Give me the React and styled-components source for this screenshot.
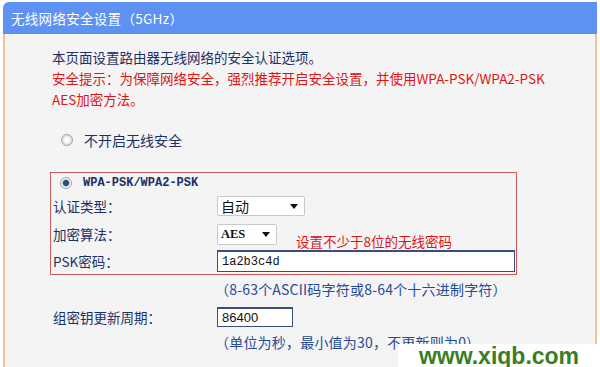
import React from 'react';
import styled, { createGlobalStyle } from 'styled-components';

const GlobalStyle = createGlobalStyle`
  html, body {
    margin: 0;
    padding: 0;
    background: #fff;
  }
  body {
    font-family: "Noto Sans CJK SC", "Noto Sans", sans-serif;
  }
`;

const Page = styled.div`
  position: relative;
  width: 600px;
  height: 367px;
  padding: 2px 3px 0 3px;
  box-sizing: border-box;
  overflow: hidden;
  display: flex;
  flex-direction: column;
`;

const Header = styled.div`
  height: 32px;
  flex-shrink: 0;
  background: #5d92f2;
  border-radius: 6px 0 0 0;
  color: #fff;
  font-size: 13.5px;
  line-height: 32px;
  padding-left: 8px;
  letter-spacing: 0.3px;
`;

const Body = styled.div`
  flex: 1;
  background: #f4f4f4;
  border-left: 2px solid #f2c48f;
  border-right: 2px solid #f2c48f;
  padding: 13px 0 0 47px;
  font-size: 13.5px;
  color: #1c2f66;
`;

const Intro = styled.p`
  margin: 0;
  line-height: 21px;
  color: ${p => (p.$warn ? '#e01414' : '#1c2f66')};
`;

const RadioRow = styled.div`
  display: flex;
  align-items: center;
  height: ${p => p.$h || 20}px;
  padding-left: ${p => p.$pl ?? 9}px;
  margin-top: ${p => p.$mt || 0}px;
  font-size: 14px;
`;

const Radio = styled.span`
  width: 12px;
  height: 12px;
  border-radius: 50%;
  box-sizing: border-box;
  border: 1px solid #a9a9a9;
  background: ${p =>
    p.$checked
      ? 'radial-gradient(circle, #2a4f7a 0 2.6px, #7fa3c4 3.2px, #e8e8e8 3.8px, #fdfdfd 100%)'
      : 'radial-gradient(circle, #fafafa 0 2.5px, #d6d6d6 5px)'};
  margin-right: 11px;
  flex-shrink: 0;
`;

const MonoLabel = styled.span`
  font-family: "Liberation Mono", monospace;
  font-size: 12px;
  font-weight: bold;
  color: #1c2f66;
`;

const SecurityBox = styled.div`
  margin: 22px 0 0 -2px;
  width: 467px;
  height: 103px;
  box-sizing: border-box;
  border: 1px solid #d05a5a;
  padding-left: 2px;
`;

const FormRow = styled.div`
  display: grid;
  grid-template-columns: 164px auto 1fr;
  align-items: center;
  height: ${p => p.$h}px;
  padding-left: ${p => p.$pl || 0}px;
`;

const Label = styled.span`
  font-size: 13.5px;
  color: #1c2f66;
`;

const Select = styled.div`
  display: flex;
  align-items: center;
  justify-content: space-between;
  width: ${p => p.$w}px;
  height: ${p => p.$hh}px;
  box-sizing: border-box;
  background: #fff;
  border: 1px solid #c9c9c9;
  border-radius: 2px;
  padding: 0 6px 0 3px;
  font-size: 14px;
  color: #111;
`;

const SelectMono = styled.span`
  font-family: "Liberation Serif", serif;
  font-size: 12.5px;
  font-weight: bold;
`;

const Arrow = styled.span`
  width: 0;
  height: 0;
  border-left: 4px solid transparent;
  border-right: 4px solid transparent;
  border-top: 5px solid #111;
`;

const Note = styled.span`
  align-self: end;
  margin: 0 0 -3px 19px;
  color: #e01414;
  font-size: 13.5px;
`;

const TextInput = styled.div`
  width: ${p => p.$w}px;
  height: ${p => p.$hh}px;
  box-sizing: border-box;
  background: #fff;
  border: 1px solid #3b4d78;
  border-top-width: 2px;
  padding-left: 4px;
  display: flex;
  align-items: center;
  color: #111;
  font-family: ${p => (p.$mono ? '"Liberation Mono", monospace' : '"Liberation Sans", sans-serif')};
  font-size: ${p => (p.$mono ? 12 : 13)}px;
`;

const Hint = styled.div`
  height: ${p => p.$h}px;
  display: flex;
  align-items: center;
  padding-left: 163px;
  color: #274a96;
  font-size: 14px;
  letter-spacing: 0.2px;
`;

const Watermark = styled.div`
  position: absolute;
  right: 0;
  bottom: 0;
  width: 202px;
  height: 23px;
  background: #fff;
  display: flex;
  align-items: center;
  justify-content: center;
  font-family: "Liberation Sans", Arial, sans-serif;
  font-weight: bold;
  font-size: 23px;
  line-height: 20px;
  color: #3b7d23;
`;

export default function App() {
  return (
    <>
      <GlobalStyle />
      <Page>
        <Header>无线网络安全设置（5GHz）</Header>
        <Body>
          <Intro>本页面设置路由器无线网络的安全认证选项。</Intro>
          <Intro $warn>安全提示：为保障网络安全，强烈推荐开启安全设置，并使用WPA-PSK/WPA2-PSK</Intro>
          <Intro $warn>AES加密方法。</Intro>

          <RadioRow $mt={20}>
            <Radio />
            不开启无线安全
          </RadioRow>

          <SecurityBox>
            <RadioRow $h={19} $pl={7}>
              <Radio $checked />
              <MonoLabel>WPA-PSK/WPA2-PSK</MonoLabel>
            </RadioRow>
            <FormRow $h={28}>
              <Label>认证类型：</Label>
              <Select $w={88} $hh={20}>
                自动
                <Arrow />
              </Select>
            </FormRow>
            <FormRow $h={28}>
              <Label>加密算法：</Label>
              <Select $w={60} $hh={21}>
                <SelectMono>AES</SelectMono>
                <Arrow />
              </Select>
              <Note>设置不少于8位的无线密码</Note>
            </FormRow>
            <FormRow $h={26}>
              <Label>PSK密码：</Label>
              <TextInput $w={298} $hh={22} $mono>1a2b3c4d</TextInput>
            </FormRow>
          </SecurityBox>

          <Hint $h={28}>（8-63个ASCII码字符或8-64个十六进制字符）</Hint>
          <FormRow $h={28} $pl={1}>
            <Label>组密钥更新周期：</Label>
            <TextInput $w={76} $hh={20}>86400</TextInput>
          </FormRow>
          <Hint $h={22}>（单位为秒，最小值为30，不更新则为0）</Hint>
        </Body>
        <Watermark>www.xiqb.com</Watermark>
      </Page>
    </>
  );
}
